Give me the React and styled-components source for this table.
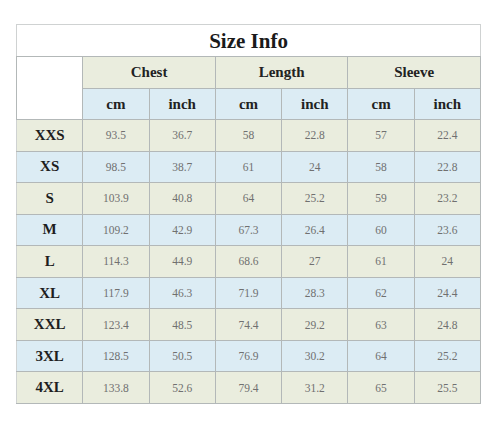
import React from "react";
import styled, { createGlobalStyle } from "styled-components";

const SERIF = `"Liberation Serif", "Times New Roman", serif`;

const Global = createGlobalStyle`
  html, body { margin: 0; padding: 0; background: #fff; }
  body { font-family: ${SERIF}; }
`;

const Page = styled.div`
  width: 500px;
  height: 424px;
  box-sizing: border-box;
  padding: 24px 0 0 16px;
  font-family: ${SERIF};
`;

const Table = styled.table`
  width: 465px;
  table-layout: fixed;
  border-collapse: collapse;
  border: 1px solid #cfd2d2;
  font-family: ${SERIF};
`;

const Row = styled.tr`
  height: ${(p) => p.$h}px;
  background: ${(p) => p.$bg || "#fff"};
`;

const Title = styled.th`
  font-family: ${SERIF};
  font-size: 21px;
  font-weight: bold;
  color: #1a1a1a;
  text-align: center;
  padding: 2px 0 0;
  border-bottom: 1px solid #b3b8b8;
`;

const HeadCell = styled.th`
  font-family: ${SERIF};
  font-size: 15px;
  font-weight: bold;
  color: #222;
  text-align: center;
  padding: 0;
  background: ${(p) => p.$bg || "transparent"};
  border: 1px solid #b3b8b8;
`;

const SizeCell = styled.th`
  font-family: ${SERIF};
  font-size: 15px;
  font-weight: bold;
  color: #1e1e1e;
  text-align: center;
  padding: 0;
  border: 1px solid #b3b8b8;
  border-left-color: #cfd2d2;
`;

const Cell = styled.td`
  font-family: ${SERIF};
  font-size: 11.5px;
  color: #707070;
  text-align: center;
  padding: 0;
  border: 1px solid #b3b8b8;
`;

const GREEN = "#eaedde";
const BLUE = "#dcecf4";

const data = [
  ["XXS", "93.5", "36.7", "58", "22.8", "57", "22.4"],
  ["XS", "98.5", "38.7", "61", "24", "58", "22.8"],
  ["S", "103.9", "40.8", "64", "25.2", "59", "23.2"],
  ["M", "109.2", "42.9", "67.3", "26.4", "60", "23.6"],
  ["L", "114.3", "44.9", "68.6", "27", "61", "24"],
  ["XL", "117.9", "46.3", "71.9", "28.3", "62", "24.4"],
  ["XXL", "123.4", "48.5", "74.4", "29.2", "63", "24.8"],
  ["3XL", "128.5", "50.5", "76.9", "30.2", "64", "25.2"],
  ["4XL", "133.8", "52.6", "79.4", "31.2", "65", "25.5"],
];

export default function App() {
  return (
    <>
      <Global />
      <Page>
        <Table>
          <tbody>
            <Row $h={32}>
              <Title colSpan={7}>Size Info</Title>
            </Row>
            <Row $h={32}>
              <HeadCell rowSpan={2} $bg="#fff" />
              {["Chest", "Length", "Sleeve"].map((g) => (
                <HeadCell key={g} colSpan={2} $bg={GREEN}>
                  {g}
                </HeadCell>
              ))}
            </Row>
            <Row $h={31}>
              {["cm", "inch", "cm", "inch", "cm", "inch"].map((u, i) => (
                <HeadCell key={i} $bg={BLUE}>
                  {u}
                </HeadCell>
              ))}
            </Row>
            {data.map((r, i) => (
              <Row key={r[0]} $h={31.55} $bg={i % 2 === 0 ? GREEN : BLUE}>
                <SizeCell>{r[0]}</SizeCell>
                {r.slice(1).map((v, j) => (
                  <Cell key={j}>{v}</Cell>
                ))}
              </Row>
            ))}
          </tbody>
        </Table>
      </Page>
    </>
  );
}
